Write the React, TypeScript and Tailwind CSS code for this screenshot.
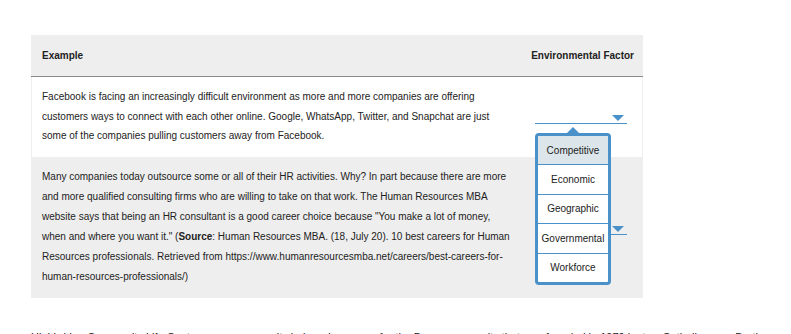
import React from "react";

const options = ["Competitive", "Economic", "Geographic", "Governmental", "Workforce"];

function Select({ open }: { open?: boolean }) {
  return (
    <div className="relative w-[92px] h-[14px] border-b border-[#4a90c9]">
      <span className="absolute right-[3px] bottom-[2px] w-0 h-0 border-l-[6px] border-r-[6px] border-t-[6px] border-l-transparent border-r-transparent border-t-[#4a90c9]" />
      {open && (
        <div className="absolute left-0 top-[17px] z-10 w-[76px]">
          <div className="flex justify-center h-[6px]">
            <span className="w-0 h-0 border-l-[6px] border-r-[6px] border-b-[6px] border-l-transparent border-r-transparent border-b-[#4a90c9]" />
          </div>
          <ul className="border-[3px] border-[#4a90c9] rounded-[4px] bg-white text-[10px] text-[#222]">
            {options.map((o, i) => (
              <li
                key={o}
                className={`flex items-center justify-center ${i === 0 ? "h-[28px] bg-[#dce6ea]" : "h-[29.5px] border-t border-[#4a90c9]"}`}
              >
                {o}
              </li>
            ))}
          </ul>
        </div>
      )}
    </div>
  );
}

export default function App() {
  return (
    <main className="w-[791px] h-[334px] overflow-hidden bg-white text-[#222] font-['Liberation_Sans',Arial,sans-serif]">
      <div className="pt-[35px] pl-[31px]">
        <div className="w-[612px]">
          {/* header */}
          <div className="h-[42px] bg-[#eeeeee] border-b border-[#8a8a8a] flex items-center justify-between pl-[11px] pr-[9px] text-[10px] font-bold">
            <span>Example</span>
            <span>Environmental Factor</span>
          </div>

          {/* row 1 */}
          <div className="flex bg-white border-x border-[#eeeeee] h-[80px]">
            <p className="w-[503px] pl-[10px] pt-[10px] text-[10px] leading-[19.6px]">
              Facebook is facing an increasingly difficult environment as more and more companies are offering<br />
              customers ways to connect with each other online. Google, WhatsApp, Twitter, and Snapchat are just<br />
              some of the companies pulling customers away from Facebook.
            </p>
            <div className="flex items-center">
              <Select open />
            </div>
          </div>

          {/* row 2 */}
          <div className="flex bg-[#eeeeee] h-[141px]">
            <p className="w-[504px] pl-[11px] pt-[10px] text-[10px] leading-[20px]">
              Many companies today outsource some or all of their HR activities. Why? In part because there are more<br />
              and more qualified consulting firms who are willing to take on that work. The Human Resources MBA<br />
              website says that being an HR consultant is a good career choice because "You make a lot of money,<br />
              when and where you want it." (<b>Source</b>: Human Resources MBA. (18, July 20). 10 best careers for Human<br />
              Resources professionals. Retrieved from https://www.humanresourcesmba.net/careers/best-careers-for-<br />
              human-resources-professionals/)
            </p>
            <div className="flex items-center">
              <Select />
            </div>
          </div>
        </div>

        <p className="mt-[31px] text-[11px] whitespace-nowrap">
          Highbridge Community Life Center was a community hub and resource for the Bronx community that was founded in 1979 by two Catholic nuns. Brothers
        </p>
      </div>
    </main>
  );
}
